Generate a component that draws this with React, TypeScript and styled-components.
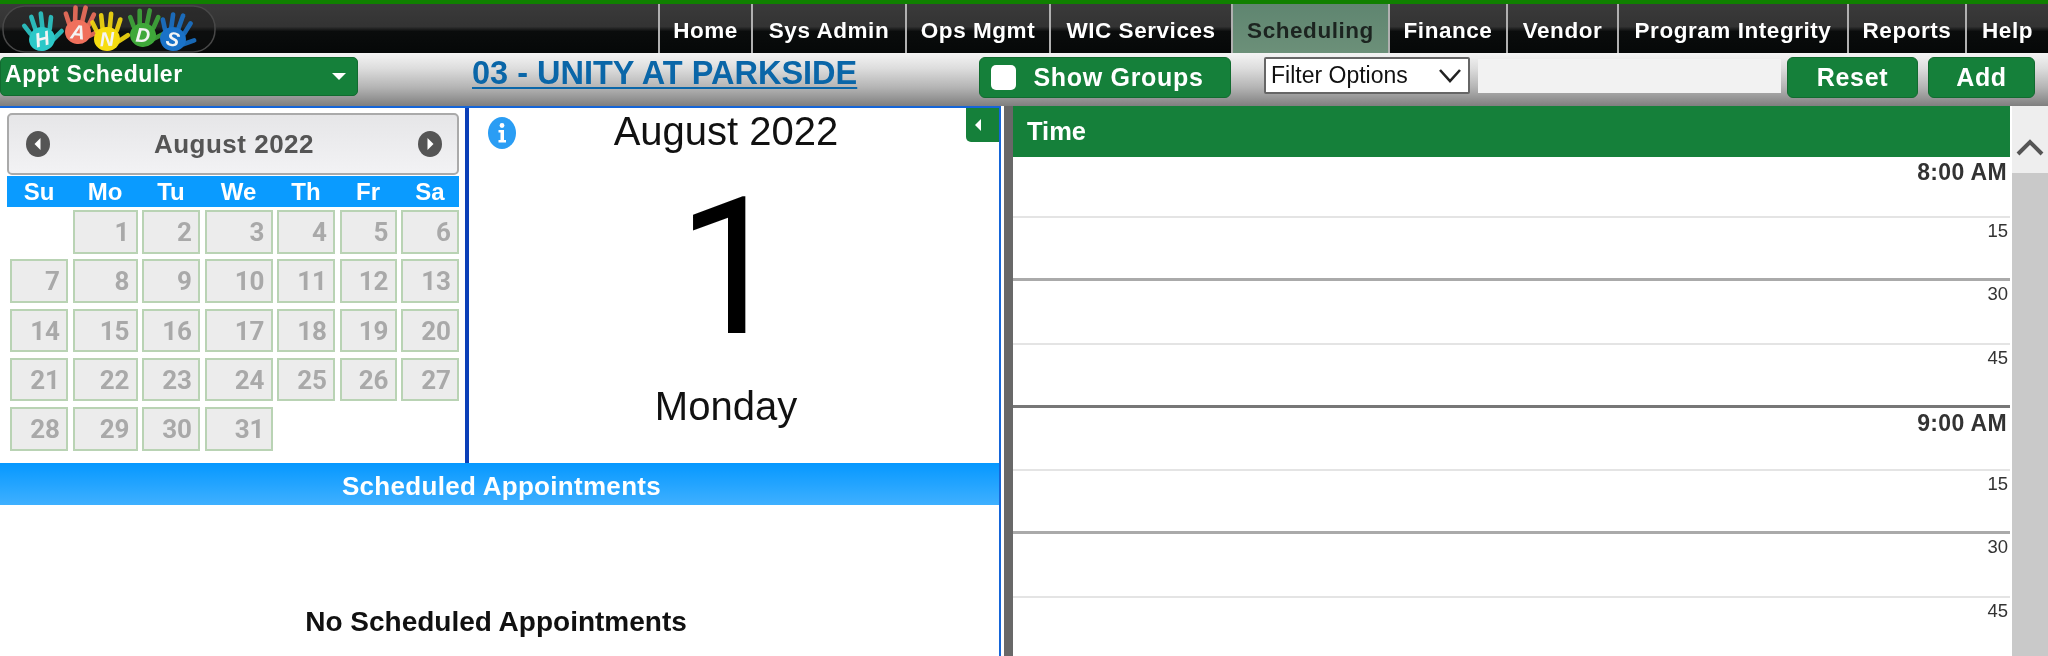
import React from "react";
import styled, { createGlobalStyle } from "styled-components";

const Global = createGlobalStyle`
  html, body { margin: 0; padding: 0; height: 656px; overflow: hidden; background: #fff; }
  * { box-sizing: border-box; }
  body { font-family: "Liberation Sans", Arial, sans-serif; }
`;

const Page = styled.div`
  width: 2048px;
  height: 656px;
  overflow: hidden;
  display: flex;
  flex-direction: column;
  background: #fff;
  filter: blur(0.6px);
`;
const TopStrip = styled.div`
  height: 4px;
  flex: none;
  background: #108000;
`;
const Nav = styled.nav`
  height: 49px;
  flex: none;
  display: flex;
  background: linear-gradient(#3a3a3a 0, #333 46%, #0a0c0c 56%, #060808 100%);
`;
const LogoArea = styled.div`
  width: 658px;
  flex: none;
  padding: 1px 0 0 2px;
`;
const NavItem = styled.a<{ $w: number; $active?: boolean }>`
  width: ${(p) => p.$w}px;
  flex: none;
  display: flex;
  align-items: center;
  justify-content: center;
  padding-top: 4px;
  border-left: 2px solid #b0b0b0;
  font-size: 22.5px;
  font-weight: 700;
  letter-spacing: 0.55px;
  white-space: nowrap;
  color: ${(p) => (p.$active ? "#1c2420" : "#fff")};
  background: ${(p) => (p.$active ? "linear-gradient(#5f8570, #6c9079)" : "transparent")};
`;
const Toolbar = styled.div`
  height: 53px;
  flex: none;
  display: flex;
  align-items: flex-start;
  padding-top: 4px;
  background: linear-gradient(#f4f4f4 0, #dcdcdc 30%, #b4b4b4 65%, #7f7f7f 100%);
`;
const GreenSelect = styled.div`
  width: 358px;
  height: 39px;
  flex: none;
  display: flex;
  align-items: center;
  justify-content: space-between;
  padding: 0 11px 4px 4px;
  background: #15803a;
  border: 1px solid #116b2f;
  border-radius: 5px;
  color: #fff;
  font-size: 23px;
  font-weight: 700;
  letter-spacing: 0.55px;
`;
const Caret = styled.span`
  width: 0;
  height: 0;
  margin-top: 4px;
  border-left: 7px solid transparent;
  border-right: 7px solid transparent;
  border-top: 7px solid #fff;
`;
const Title = styled.a`
  width: 386px;
  flex: none;
  margin-left: 114px;
  font-size: 32.5px;
  line-height: 32px;
  font-weight: 700;
  color: #0a66a8;
  text-decoration: underline;
  text-decoration-thickness: 2px;
  text-underline-offset: 3px;
  white-space: nowrap;
`;
const GreenButton = styled.button<{ $w: number; $ml: number; $pr?: number }>`
  width: ${(p) => p.$w}px;
  height: 41px;
  flex: none;
  margin-left: ${(p) => p.$ml}px;
  padding: 0 ${(p) => p.$pr ?? 0}px 0 0;
  display: flex;
  align-items: center;
  justify-content: center;
  gap: 17px;
  background: #15803a;
  border: 1px solid #116b2f;
  border-radius: 6px;
  color: #fff;
  font-family: inherit;
  font-size: 25px;
  font-weight: 700;
  letter-spacing: 0.7px;
`;
const Check = styled.span`
  width: 25px;
  height: 25px;
  flex: none;
  background: #fff;
  border-radius: 5px;
`;
const FilterBox = styled.div`
  width: 206px;
  height: 37px;
  flex: none;
  margin-left: 33px;
  padding: 0 5px 0 5px;
  display: flex;
  align-items: center;
  justify-content: space-between;
  background: #fff;
  color: #111;
  border: 2px solid #666;
  border-radius: 2px;
  font-size: 23px;
  white-space: nowrap;
`;
const FilterChevron = styled.svg`
  width: 26px;
  height: 16px;
  flex: none;
`;
const FilterInput = styled.input`
  width: 303px;
  height: 34px;
  flex: none;
  margin: 2px 0 0 8px;
  background: #f2f2f2;
  border: none;
`;
const Main = styled.div`
  flex: 1;
  min-height: 0;
  display: flex;
`;
const LeftPane = styled.div`
  width: 1001px;
  flex: none;
  position: relative;
  display: flex;
  flex-direction: column;
  border-top: 2px solid #1565d8;
  border-right: 2px solid #1565d8;
`;
const TopRow = styled.div`
  height: 355px;
  flex: none;
  display: flex;
`;
const CalendarPane = styled.div`
  width: 469px;
  flex: none;
  padding: 5px 0 0 7px;
  border-right: 4px solid #0b3fb8;
`;
const CalHeader = styled.div`
  width: 452px;
  height: 62px;
  display: flex;
  align-items: center;
  justify-content: space-between;
  padding: 0 14px 0 16px;
  background: linear-gradient(#e6e6e8, #f2f2f4);
  border: 2px solid #aaa;
  border-radius: 5px;
  color: #555;
  font-size: 26px;
  font-weight: 700;
  letter-spacing: 0.5px;
`;
const ArrowDot = styled.svg`
  width: 26px;
  height: 30px;
  flex: none;
`;
const Weekdays = styled.div`
  width: 452px;
  height: 31px;
  display: grid;
  grid-template-columns: 58px 65px 58px 68px 58px 57px 58px;
  column-gap: 4.5px;
  padding-left: 3px;
  margin-top: 1px;
  align-items: center;
  background: #0a9bff;
  color: #fff;
  font-size: 24px;
  font-weight: 700;
  text-align: center;
`;
const Days = styled.div`
  display: grid;
  grid-template-columns: 58px 65px 58px 68px 58px 57px 58px;
  column-gap: 4.5px;
  row-gap: 5.8px;
  padding: 3px 0 0 3px;
`;
const Day = styled.div<{ $col?: number }>`
  height: 43.5px;
  ${(p) => (p.$col ? `grid-column-start: ${p.$col};` : "")}
  padding-right: 6px;
  line-height: 40px;
  text-align: right;
  background: #ececec;
  border: 2px solid #b9d3b4;
  color: #a9a9a9;
  font-family: Roboto, "Liberation Sans", sans-serif;
  font-size: 26px;
  font-weight: 700;
`;
const DayPane = styled.div`
  flex: 1;
  position: relative;
  display: flex;
  flex-direction: column;
  align-items: center;
  padding-right: 16px;
  color: #111;
`;
const MonthLabel = styled.div`
  font-size: 40px;
  line-height: 46px;
`;
const BigDay = styled.div`
  font-family: Roboto, "Liberation Sans", sans-serif;
  font-size: 192px;
  line-height: 192px;
  margin: 18px 0 0 10px;
  color: #000;
`;
const Weekday = styled.div`
  font-size: 40px;
  line-height: 46px;
  margin-top: 19px;
`;
const InfoIcon = styled.svg`
  position: absolute;
  left: 19px;
  top: 9px;
  width: 28px;
  height: 32px;
`;
const CollapseTab = styled.div`
  position: absolute;
  top: 0;
  right: 0;
  width: 33px;
  height: 34px;
  display: flex;
  align-items: center;
  justify-content: center;
  background: #15803a;
  border-radius: 0 0 0 5px;
`;
const LeftTriangle = styled.span`
  width: 0;
  height: 0;
  margin-right: 9px;
  border-top: 6px solid transparent;
  border-bottom: 6px solid transparent;
  border-right: 6px solid #fff;
`;
const SectionBar = styled.div`
  height: 42px;
  flex: none;
  display: flex;
  align-items: center;
  justify-content: center;
  padding: 5px 0 0 4px;
  background: linear-gradient(#0698ff, #3fb0ff);
  color: #fff;
  font-size: 26px;
  font-weight: 700;
  letter-spacing: 0.3px;
`;
const EmptyNote = styled.div`
  margin: 100px 0 0 -7px;
  text-align: center;
  color: #111;
  font-size: 28px;
  line-height: 34px;
  font-weight: 700;
`;
const Splitter = styled.div`
  width: 9px;
  flex: none;
  margin-left: 3px;
  background: #686868;
`;
const SchedulePane = styled.div`
  width: 997px;
  flex: none;
  display: flex;
  flex-direction: column;
`;
const TimeHeader = styled.div`
  height: 51px;
  flex: none;
  padding: 0 14px 0 14px;
  line-height: 50px;
  background: #15803a;
  color: #fff;
  font-size: 25.5px;
  font-weight: 700;
`;
const TimeRow = styled.div<{ $h: number; $line: "hour" | "half" | "quarter"; $hour?: boolean }>`
  height: ${(p) => p.$h}px;
  flex: none;
  padding: ${(p) => (p.$hour ? "4px 3px" : "2px 2px")} 0 0;
  text-align: right;
  line-height: 22px;
  color: #333;
  font-size: ${(p) => (p.$hour ? "23px" : "18.5px")};
  font-weight: ${(p) => (p.$hour ? 700 : 400)};
  letter-spacing: ${(p) => (p.$hour ? "0.35px" : "0")};
  border-bottom: ${(p) =>
    p.$line === "hour" ? "3px solid #777" : p.$line === "half" ? "3px solid #aaa" : "2px solid #e4e4e4"};
`;
const ScrollBar = styled.div`
  width: 36px;
  flex: none;
  margin-left: 2px;
  display: flex;
  flex-direction: column;
  background: #c9c9c9;
`;
const ScrollUp = styled.div`
  height: 67px;
  flex: none;
  padding-top: 31px;
  background: #eeeeee;
  display: flex;
  justify-content: center;
  align-items: flex-start;
`;
const ChevronIcon = styled.svg`
  width: 30px;
  height: 20px;
`;

const LOGO_HANDS: { x: number; y: number; c: string; l: string; r: number }[] = [
  { x: 40, y: 34, c: "#2cc8c8", l: "H", r: -14 },
  { x: 76, y: 27, c: "#f0705c", l: "A", r: 6 },
  { x: 105, y: 34, c: "#f6dc10", l: "N", r: -2 },
  { x: 141, y: 30, c: "#3fa83a", l: "D", r: 4 },
  { x: 171, y: 34, c: "#1a72c8", l: "S", r: 12 },
];

function Logo() {
  return (
    <svg width="214" height="48" viewBox="0 0 214 48" style={{ display: "block" }}>
      <rect x="1" y="1" width="212" height="46" rx="22" fill="rgba(20,20,20,0.35)" stroke="#484848" strokeWidth="1.5" />
      {LOGO_HANDS.map((h) => (
        <g key={h.l} transform={`translate(${h.x} ${h.y}) rotate(${h.r})`}>
          <ellipse cx="0" cy="0" rx="13" ry="12" fill={h.c} />
          <g stroke={h.c} strokeWidth="4.6" strokeLinecap="round" opacity="0.9">
            <path d="M-10 -8 L-14 -17" />
            <path d="M-4 -10 L-5 -24" />
            <path d="M3 -10 L5 -25" />
            <path d="M10 -8 L14 -19" />
            <path d="M11 3 L21 -3" />
          </g>
          <text x="0" y="7" textAnchor="middle" fontFamily="Liberation Sans" fontSize="20" fontWeight="700" fontStyle="italic" fill="#f4f4f4">
            {h.l}
          </text>
        </g>
      ))}
    </svg>
  );
}

const NAV: [string, number][] = [
  ["Home", 93],
  ["Sys Admin", 154],
  ["Ops Mgmt", 144],
  ["WIC Services", 182],
  ["Scheduling", 157],
  ["Finance", 118],
  ["Vendor", 111],
  ["Program Integrity", 230],
  ["Reports", 118],
  ["Help", 83],
];

const DAYS = Array.from({ length: 31 }, (_, i) => i + 1);
const WEEK = ["Su", "Mo", "Tu", "We", "Th", "Fr", "Sa"];

const ROWS: { t: string; h: number; line: "hour" | "half" | "quarter"; hour?: boolean }[] = [
  { t: "8:00 AM", h: 61, line: "quarter", hour: true },
  { t: "15", h: 63.3, line: "half" },
  { t: "30", h: 63.3, line: "quarter" },
  { t: "45", h: 63.3, line: "hour" },
  { t: "9:00 AM", h: 63.3, line: "quarter", hour: true },
  { t: "15", h: 63.3, line: "half" },
  { t: "30", h: 63.3, line: "quarter" },
  { t: "45", h: 63.3, line: "hour" },
];

export default function App() {
  return (
    <Page>
      <Global />
      <TopStrip />
      <Nav>
        <LogoArea>
          <Logo />
        </LogoArea>
        {NAV.map(([label, w]) => (
          <NavItem key={label} $w={w} $active={label === "Scheduling"}>
            {label}
          </NavItem>
        ))}
      </Nav>
      <Toolbar>
        <GreenSelect>
          Appt Scheduler
          <Caret />
        </GreenSelect>
        <Title>03 - UNITY AT PARKSIDE</Title>
        <GreenButton $w={252} $ml={121} $pr={15}>
          <Check />
          Show Groups
        </GreenButton>
        <FilterBox>
          Filter Options
          <FilterChevron viewBox="0 0 26 16">
            <path d="M3 2 L13 13 L23 2" fill="none" stroke="#222" strokeWidth="2.6" />
          </FilterChevron>
        </FilterBox>
        <FilterInput />
        <GreenButton $w={131} $ml={6}>Reset</GreenButton>
        <GreenButton $w={107} $ml={10}>Add</GreenButton>
      </Toolbar>
      <Main>
        <LeftPane>
          <TopRow>
            <CalendarPane>
              <CalHeader>
                <ArrowDot viewBox="0 0 26 30">
                  <ellipse cx="13" cy="15" rx="12" ry="13" fill="#555" />
                  <path d="M15.5 9 L9.5 15 L15.5 21 Z" fill="#fff" />
                </ArrowDot>
                August 2022
                <ArrowDot viewBox="0 0 26 30">
                  <ellipse cx="13" cy="15" rx="12" ry="13" fill="#555" />
                  <path d="M10.5 9 L16.5 15 L10.5 21 Z" fill="#fff" />
                </ArrowDot>
              </CalHeader>
              <Weekdays>
                {WEEK.map((d) => (
                  <span key={d}>{d}</span>
                ))}
              </Weekdays>
              <Days>
                {DAYS.map((d) => (
                  <Day key={d} $col={d === 1 ? 2 : undefined}>
                    {d}
                  </Day>
                ))}
              </Days>
            </CalendarPane>
            <DayPane>
              <InfoIcon viewBox="0 0 28 32">
                <ellipse cx="14" cy="16" rx="14" ry="16" fill="#2a9df4" />
                <circle cx="14" cy="8.5" r="2.4" fill="#fff" />
                <path d="M10.5 13 H16 V23 H18 V25.5 H10.5 V23 H12.5 V15.5 H10.5 Z" fill="#fff" />
              </InfoIcon>
              <MonthLabel>August 2022</MonthLabel>
              <BigDay>1</BigDay>
              <Weekday>Monday</Weekday>
            </DayPane>
          </TopRow>
          <SectionBar>Scheduled Appointments</SectionBar>
          <EmptyNote>No Scheduled Appointments</EmptyNote>
          <CollapseTab>
            <LeftTriangle />
          </CollapseTab>
        </LeftPane>
        <Splitter />
        <SchedulePane>
          <TimeHeader>Time</TimeHeader>
          {ROWS.map((r, i) => (
            <TimeRow key={i} $h={r.h} $line={r.line} $hour={r.hour}>
              {r.t}
            </TimeRow>
          ))}
        </SchedulePane>
        <ScrollBar>
          <ScrollUp>
            <ChevronIcon viewBox="0 0 30 20">
              <path d="M3 17 L15 5 L27 17" fill="none" stroke="#555" strokeWidth="4" />
            </ChevronIcon>
          </ScrollUp>
        </ScrollBar>
      </Main>
    </Page>
  );
}
